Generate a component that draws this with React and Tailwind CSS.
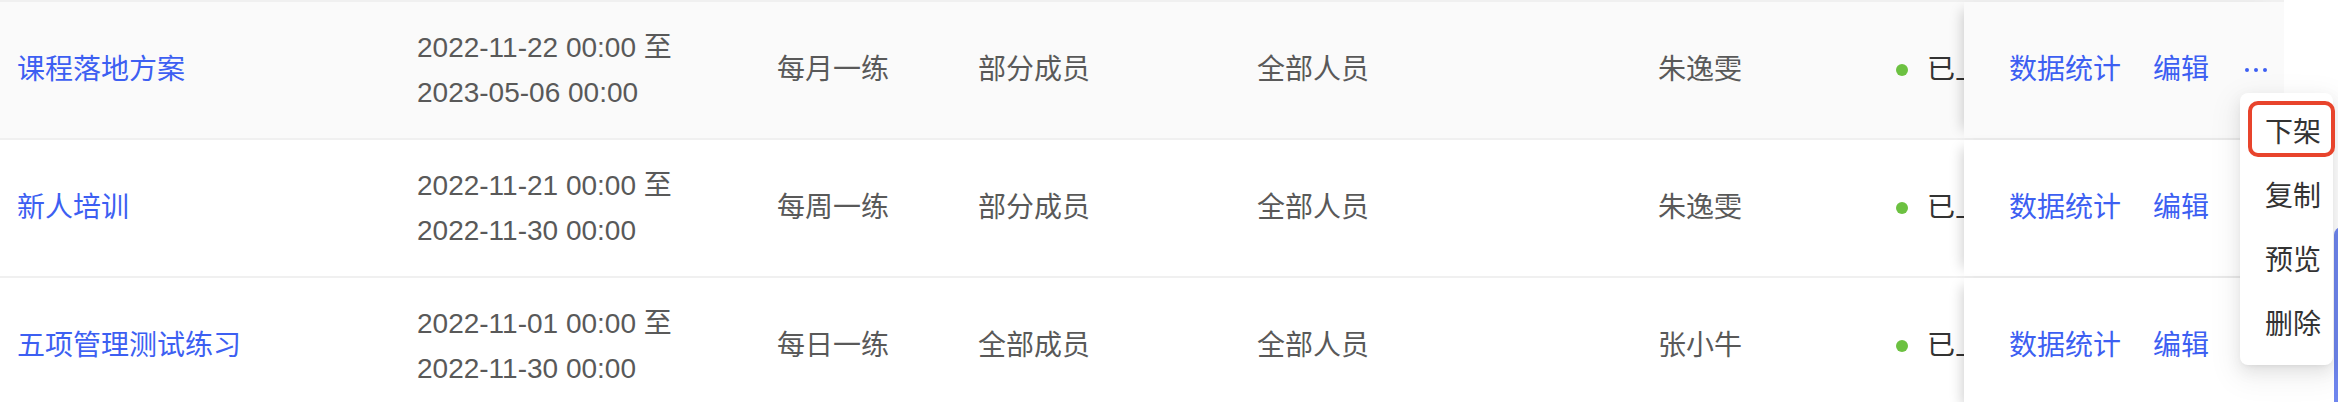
import React from "react";

const rows = [
  {
    id: 1,
    name: "课程落地方案",
    start: "2022-11-22 00:00",
    end: "2023-05-06 00:00",
    cycle: "每月一练",
    members: "部分成员",
    viewers: "全部人员",
    owner: "朱逸雯",
    status: "已上架",
    hover: true,
  },
  {
    id: 2,
    name: "新人培训",
    start: "2022-11-21 00:00",
    end: "2022-11-30 00:00",
    cycle: "每周一练",
    members: "部分成员",
    viewers: "全部人员",
    owner: "朱逸雯",
    status: "已上架",
  },
  {
    id: 3,
    name: "五项管理测试练习",
    start: "2022-11-01 00:00",
    end: "2022-11-30 00:00",
    cycle: "每日一练",
    members: "全部成员",
    viewers: "全部人员",
    owner: "张小牛",
    status: "已上架",
  },
];

const menuItems = ["下架", "复制", "预览", "删除"];

function MoreDots() {
  return (
    <span className="flex items-center gap-[5px] h-[28px]">
      <span className="w-[4px] h-[4px] rounded-full bg-[#3d5ff2]" />
      <span className="w-[4px] h-[4px] rounded-full bg-[#3d5ff2]" />
      <span className="w-[4px] h-[4px] rounded-full bg-[#3d5ff2]" />
    </span>
  );
}

export default function App() {
  return (
    <div
      className="relative w-[2338px] h-[402px] overflow-hidden bg-white text-[28px] text-[#595959]"
      style={{ fontFamily: '"Liberation Sans", "Noto Sans CJK SC", sans-serif' }}
    >
      <div className="w-[2284px] border-t-2 border-[#f0f0f0]">
        {rows.map((row) => (
          <div
            key={row.id}
            className={`flex h-[138px] border-b-2 border-[#f0f0f0] ${
              row.hover ? "bg-[#fafafa]" : "bg-white"
            }`}
          >
            <div className="w-[400px] pl-[17px] flex items-center text-[#3d5ff2] whitespace-nowrap">
              {row.name}
            </div>
            <div className="w-[360px] pl-[17px] flex flex-col justify-center whitespace-nowrap">
              <div className="leading-[45px]">{row.start} 至</div>
              <div className="leading-[45px]">{row.end}</div>
            </div>
            <div className="w-[201px] pl-[17px] flex items-center">{row.cycle}</div>
            <div className="w-[280px] pl-[17px] flex items-center">{row.members}</div>
            <div className="w-[400px] pl-[16px] flex items-center">{row.viewers}</div>
            <div className="w-[241px] pl-[17px] flex items-center">{row.owner}</div>
            <div className="w-[82px] pl-[14px] flex items-center overflow-hidden whitespace-nowrap">
              <span className="shrink-0 w-[12px] h-[12px] rounded-full bg-[#6cc141]" />
              <span className="ml-[19px] text-[#333]">{row.status}</span>
            </div>
            <div
              className={`relative z-10 w-[320px] pl-[45px] flex items-center whitespace-nowrap shadow-[-10px_0_12px_-8px_rgba(0,0,0,0.18)] ${
                row.hover ? "bg-[#fafafa]" : "bg-white"
              }`}
            >
              <span className="text-[#3d5ff2]">数据统计</span>
              <span className="ml-[32px] text-[#3d5ff2]">编辑</span>
              <span className="ml-[36px]">
                <MoreDots />
              </span>
            </div>
          </div>
        ))}
      </div>

      {/* floating widget edge */}
      <div className="absolute left-[2334px] top-[227px] w-[12px] h-[200px] rounded-tl-[8px] bg-[#6f86ee]" />

      {/* dropdown menu */}
      <div className="absolute z-20 left-[2240px] top-[93px] w-[93px] py-[8px] bg-white rounded-[8px] shadow-[0_6px_16px_rgba(0,0,0,0.08),0_3px_6px_-4px_rgba(0,0,0,0.12),0_9px_28px_8px_rgba(0,0,0,0.05)]">
        {menuItems.map((item) => (
          <div key={item} className="h-[64px] pl-[25px] flex items-center text-[#333] whitespace-nowrap">
            {item}
          </div>
        ))}
      </div>

      {/* highlight box */}
      <div className="absolute z-30 left-[2248px] top-[101px] w-[87px] h-[56px] border-[4px] border-[#e8442c] rounded-[10px]" />
    </div>
  );
}
